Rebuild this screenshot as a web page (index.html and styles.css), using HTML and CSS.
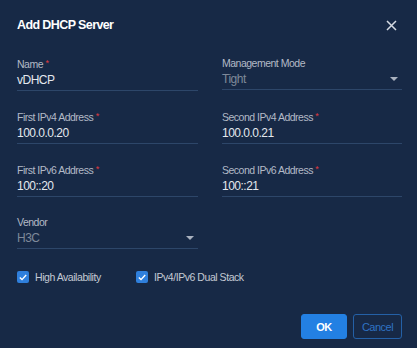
FILE: index.html
```html
<!DOCTYPE html>
<html>
<head>
<meta charset="utf-8">
<link rel="stylesheet" href="styles.css">
</head>
<body>
<div class="dialog">
  <div class="header">
    <div class="title">Add DHCP Server</div>
    <svg class="close" width="11" height="11" viewBox="0 0 11 11"><path d="M1 1L10 10M10 1L1 10" stroke="#d6dbe3" stroke-width="1.5" fill="none"/></svg>
  </div>
  <div class="form">
    <div class="field">
      <div class="label">Name <span class="req">*</span></div>
      <div class="input">vDHCP</div>
    </div>
    <div class="field">
      <div class="label">Management Mode</div>
      <div class="input select"><span>Tight</span><span class="caret"></span></div>
    </div>
    <div class="field">
      <div class="label">First IPv4 Address <span class="req">*</span></div>
      <div class="input">100.0.0.20</div>
    </div>
    <div class="field">
      <div class="label">Second IPv4 Address <span class="req">*</span></div>
      <div class="input">100.0.0.21</div>
    </div>
    <div class="field">
      <div class="label">First IPv6 Address <span class="req">*</span></div>
      <div class="input">100::20</div>
    </div>
    <div class="field">
      <div class="label">Second IPv6 Address <span class="req">*</span></div>
      <div class="input">100::21</div>
    </div>
    <div class="field">
      <div class="label">Vendor</div>
      <div class="input select"><span>H3C</span><span class="caret"></span></div>
    </div>
  </div>
  <div class="checks">
    <label class="check check-ha"><span class="box"><svg width="8" height="7" viewBox="0 0 8 7"><path d="M0.8 3.6L3 5.6L7.2 1" stroke="#fff" stroke-width="1.4" fill="none"/></svg></span>High Availability</label>
    <label class="check"><span class="box"><svg width="8" height="7" viewBox="0 0 8 7"><path d="M0.8 3.6L3 5.6L7.2 1" stroke="#fff" stroke-width="1.4" fill="none"/></svg></span>IPv4/IPv6 Dual Stack</label>
  </div>
  <div class="footer">
    <button class="btn ok">OK</button>
    <button class="btn cancel">Cancel</button>
  </div>
</div>
</body>
</html>
```
FILE: styles.css
```css
html, body {
  margin: 0;
  padding: 0;
  background: #172946;
  font-family: "Liberation Sans", Arial, sans-serif;
}
.dialog {
  width: 417px;
  height: 348px;
  box-sizing: border-box;
  padding: 17px 15px 0 17px;
}
.header {
  display: flex;
  align-items: center;
  justify-content: space-between;
  height: 16px;
}
.title {
  color: #ffffff;
  font-weight: bold;
  font-size: 12.5px;
  letter-spacing: -0.6px;
  line-height: 16px;
}
.close {
  margin-right: 5px;
}
.form {
  margin-top: 23px;
  display: grid;
  grid-template-columns: 181px 180px;
  column-gap: 24px;
  row-gap: 18px;
}
.field {
  display: flex;
  flex-direction: column;
}
.label {
  color: #b3bac6;
  font-size: 10.5px;
  letter-spacing: -0.5px;
  line-height: 14px;
}
.req {
  color: #e0393e;
  font-size: 9px;
  vertical-align: 2px;
}
.input {
  margin-top: 1px;
  color: #e4e8ee;
  font-size: 12px;
  letter-spacing: -0.5px;
  line-height: 16px;
  padding-bottom: 2px;
  border-bottom: 1px solid #2d4669;
}
.select {
  display: flex;
  justify-content: space-between;
  align-items: center;
  color: #7f899a;
}
.caret {
  width: 0;
  height: 0;
  border-left: 4px solid transparent;
  border-right: 4px solid transparent;
  border-top: 4px solid #aab2bf;
  margin-right: 4px;
}
.checks {
  margin-top: 22px;
  display: flex;
  align-items: center;
  height: 12px;
}
.check {
  display: flex;
  align-items: center;
  color: #c4cad4;
  font-size: 10.5px;
  letter-spacing: -0.45px;
  line-height: 12px;
}
.check-ha {
  width: 119px;
}
.box {
  width: 12px;
  height: 12px;
  border-radius: 2px;
  background: #2f7fdc;
  display: flex;
  align-items: center;
  justify-content: center;
  margin-right: 6px;
}
.footer {
  margin-top: 31px;
  display: flex;
  justify-content: flex-end;
  gap: 6px;
}
.btn {
  height: 25px;
  box-sizing: border-box;
  border-radius: 3px;
  font-family: "Liberation Sans", Arial, sans-serif;
  font-size: 11px;
  letter-spacing: -0.5px;
  padding: 0;
  cursor: pointer;
}
.ok {
  width: 46px;
  background: #2380e3;
  border: 1px solid #2380e3;
  color: #ffffff;
  font-weight: bold;
}
.cancel {
  width: 49px;
  background: transparent;
  border: 1px solid #2460a6;
  color: #2f73c4;
}
```
